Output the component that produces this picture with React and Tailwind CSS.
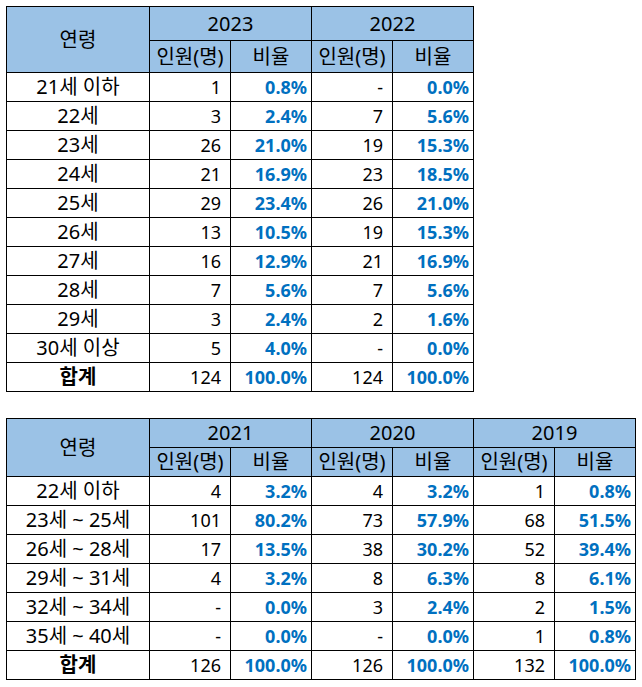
const font = "font-['Noto_Sans','Noto_Sans_CJK_KR',sans-serif]";

const table1 = {
  years: ['2023', '2022'],
  rows: [
    ['21세 이하', ['1', '0.8%'], ['-', '0.0%']],
    ['22세', ['3', '2.4%'], ['7', '5.6%']],
    ['23세', ['26', '21.0%'], ['19', '15.3%']],
    ['24세', ['21', '16.9%'], ['23', '18.5%']],
    ['25세', ['29', '23.4%'], ['26', '21.0%']],
    ['26세', ['13', '10.5%'], ['19', '15.3%']],
    ['27세', ['16', '12.9%'], ['21', '16.9%']],
    ['28세', ['7', '5.6%'], ['7', '5.6%']],
    ['29세', ['3', '2.4%'], ['2', '1.6%']],
    ['30세 이상', ['5', '4.0%'], ['-', '0.0%']],
  ],
  total: [['124', '100.0%'], ['124', '100.0%']],
};

const table2 = {
  years: ['2021', '2020', '2019'],
  rows: [
    ['22세 이하', ['4', '3.2%'], ['4', '3.2%'], ['1', '0.8%']],
    ['23세 ~ 25세', ['101', '80.2%'], ['73', '57.9%'], ['68', '51.5%']],
    ['26세 ~ 28세', ['17', '13.5%'], ['38', '30.2%'], ['52', '39.4%']],
    ['29세 ~ 31세', ['4', '3.2%'], ['8', '6.3%'], ['8', '6.1%']],
    ['32세 ~ 34세', ['-', '0.0%'], ['3', '2.4%'], ['2', '1.5%']],
    ['35세 ~ 40세', ['-', '0.0%'], ['-', '0.0%'], ['1', '0.8%']],
  ],
  total: [['126', '100.0%'], ['126', '100.0%'], ['132', '100.0%']],
};

const head = 'bg-[#9bc2e6] flex items-center justify-center text-[20px]';
const label = 'bg-white flex items-center justify-center text-[20px]';
const num = 'bg-white flex items-center justify-end pr-[9px]';
const pct = 'bg-white flex items-center justify-end pr-[4px] font-bold text-[#0070c0]';

// one grid per table: black background + 1px gaps draw the cell lines
function AgeTable({ data, cols, rows }) {
  return (
    <div className={`grid ${cols} ${rows} gap-px p-px bg-black w-fit text-[18px] text-black ${font}`}>
      <div className={`row-span-2 ${head}`}>연령</div>
      {data.years.map((y) => (
        <div key={y} className={`col-span-2 ${head}`}>
          {y}
        </div>
      ))}
      {data.years.map((y) => [
        <div key={y + 'n'} className={head}>인원(명)</div>,
        <div key={y + 'p'} className={head}>비율</div>,
      ])}
      {data.rows.map(([name, ...vals]) => [
        <div key={name} className={label}>{name}</div>,
        ...vals.flatMap(([n, p], i) => [
          <div key={name + i + 'n'} className={num}>{n}</div>,
          <div key={name + i + 'p'} className={pct}>{p}</div>,
        ]),
      ])}
      <div className={`${label} font-bold`}>합계</div>
      {data.total.flatMap(([n, p], i) => [
        <div key={'t' + i + 'n'} className={num}>{n}</div>,
        <div key={'t' + i + 'p'} className={pct}>{p}</div>,
      ])}
    </div>
  );
}

export default function App() {
  return (
    <div className="bg-white w-[642px] h-[687px] pt-[6px] pl-[6px]">
      <AgeTable
        data={table1}
        cols="grid-cols-[142px_80px_80px_80px_80px]"
        rows="grid-rows-[33px_31px_repeat(11,28px)]"
      />
      <div className="mt-[26px]">
        <AgeTable
          data={table2}
          cols="grid-cols-[142px_80px_80px_80px_80px_80px_80px]"
          rows="grid-rows-[28px_28px_repeat(7,28px)]"
        />
      </div>
    </div>
  );
}
